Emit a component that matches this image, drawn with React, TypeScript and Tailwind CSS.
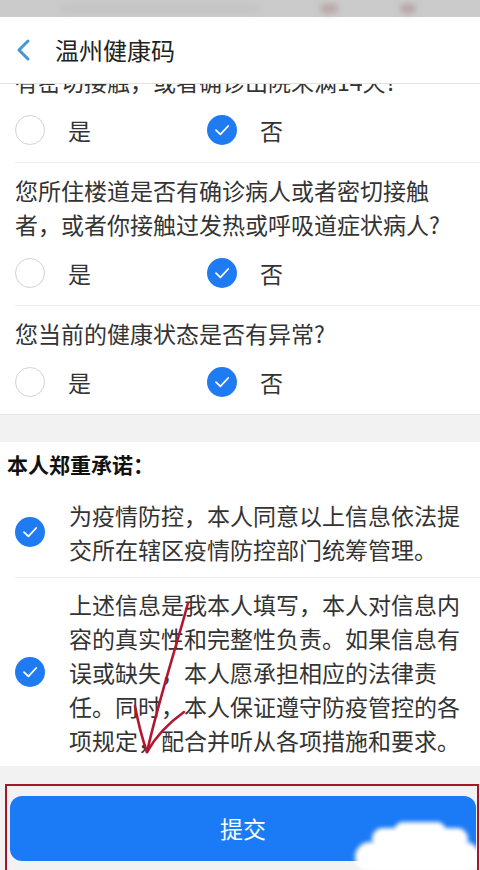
import React from "react";

const FONT = { fontFamily: '"Noto Sans CJK SC", "Noto Sans", sans-serif' };

function Check() {
  return (
    <span className="flex h-[30px] w-[30px] shrink-0 items-center justify-center rounded-full bg-[#1f7bf2]">
      <svg width="30" height="30" viewBox="0 0 30 30" fill="none">
        <path d="M9 15.2 L13.4 19.4 L21.2 11" stroke="#fff" strokeWidth="1.8" strokeLinecap="round" strokeLinejoin="round" />
      </svg>
    </span>
  );
}

function Empty() {
  return <span className="h-[30px] w-[30px] shrink-0 rounded-full border-[1.5px] border-[#d2d2d2] bg-white" />;
}

function YesNo() {
  return (
    <div className="flex h-[64px] items-center pl-[15px]">
      <div className="flex w-[192px] items-center gap-[23px]">
        <Empty />
        <span>是</span>
      </div>
      <div className="flex items-center gap-[23px]">
        <Check />
        <span>否</span>
      </div>
    </div>
  );
}

export default function App() {
  return (
    <div className="relative h-[870px] w-[480px] overflow-hidden bg-[#f2f2f2] text-[23px] text-[#333]" style={FONT}>
      {/* status bar (blurred) */}
      <div className="relative h-[17px] bg-[#cbcbcb]">
        <div className="absolute left-[320px] top-[4px] h-[9px] w-[18px] rounded-full bg-[#b9a4a4] blur-[3px]" />
        <div className="absolute left-[400px] top-[4px] h-[9px] w-[16px] rounded-full bg-[#b8a2a2] blur-[3px]" />
        <div className="absolute left-[60px] top-[5px] h-[7px] w-[200px] rounded-full bg-[#c3c3c3] blur-[3px]" />
      </div>

      {/* header */}
      <div className="flex h-[67px] items-center border-b border-[#e2e2e2] bg-white">
        <svg width="20" height="24" viewBox="0 0 20 24" className="ml-[14px]">
          <path d="M14 3 L5 12 L14 21" stroke="#4596d3" strokeWidth="3" fill="none" strokeLinecap="round" strokeLinejoin="round" />
        </svg>
        <span className="ml-[21px] text-[24px] text-[#222]">温州健康码</span>
      </div>

      {/* questions */}
      <div className="overflow-hidden border-b border-[#e6e6e6] bg-white">
        <div className="-mt-[20px] pl-[15px] leading-[34px]">有密切接触，或者确诊出院未满14天?</div>
        <YesNo />
        <div className="ml-[15px] border-t border-[#eeeeee]" />
        <div className="pl-[15px] pt-[10px] leading-[34px]">
          您所住楼道是否有确诊病人或者密切接触
          <br />
          者，或者你接触过发热或呼吸道症状病人?
        </div>
        <YesNo />
        <div className="ml-[15px] border-t border-[#eeeeee]" />
        <div className="pl-[15px] pt-[10px] leading-[34px]">您当前的健康状态是否有异常?</div>
        <YesNo />
      </div>

      <div className="h-[27px]" />

      {/* promise */}
      <div className="bg-white">
        <div className="flex h-[45px] items-center pl-[7px] text-[21px] font-bold text-[#111]">本人郑重承诺：</div>
        <div className="flex items-center py-[11px] pl-[15px]">
          <Check />
          <div className="ml-[24px] leading-[34px]">
            为疫情防控，本人同意以上信息依法提
            <br />
            交所在辖区疫情防控部门统筹管理。
          </div>
        </div>
        <div className="ml-[15px] border-t border-[#eeeeee]" />
        <div className="flex items-center py-[9px] pl-[15px]">
          <Check />
          <div className="ml-[24px] leading-[34px]">
            上述信息是我本人填写，本人对信息内
            <br />
            容的真实性和完整性负责。如果信息有
            <br />
            误或缺失，本人愿承担相应的法律责
            <br />
            任。同时，本人保证遵守防疫管控的各
            <br />
            项规定，配合并听从各项措施和要求。
          </div>
        </div>
      </div>

      {/* submit */}
      <div className="px-[10px] pr-[4px] pt-[30px]">
        <button className="flex h-[65px] w-full items-center justify-center rounded-[12px] bg-[#1b7af5] text-[23px] text-white">
          提交
        </button>
      </div>

      {/* white scribble over the button */}
      <div className="absolute left-[372px] top-[828px] h-[22px] w-[96px] rounded-full bg-white blur-[2px]" />
      <div className="absolute left-[355px] top-[842px] h-[30px] w-[125px] rounded-full bg-white blur-[2px]" />
      <div className="absolute left-[395px] top-[822px] h-[16px] w-[50px] rounded-full bg-white blur-[2px]" />

      {/* red annotation box */}
      <div className="pointer-events-none absolute left-[5px] right-[1px] top-[784px] bottom-[-10px] border-2 border-[#a3172d]" />

      {/* red arrow */}
      <svg className="pointer-events-none absolute left-0 top-0" width="480" height="870" viewBox="0 0 480 870" fill="none">
        <path d="M188 603 C 176 648, 160 695, 147 752" stroke="#b0182f" strokeWidth="2.6" strokeLinecap="round" />
        <path d="M135 706 C 138 722, 142 738, 147 752" stroke="#b0182f" strokeWidth="2.6" strokeLinecap="round" />
        <path d="M184 712 C 170 722, 156 736, 147 752" stroke="#b0182f" strokeWidth="2.6" strokeLinecap="round" />
      </svg>
    </div>
  );
}
